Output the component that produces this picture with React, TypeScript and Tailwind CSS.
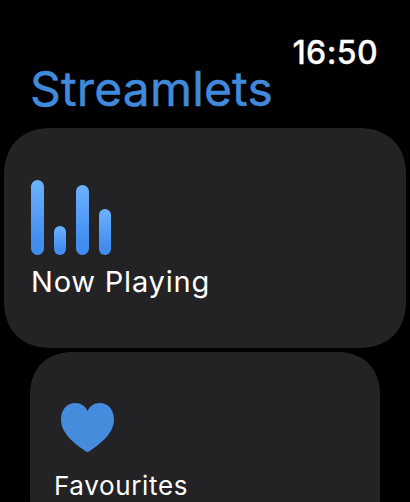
import type { ReactNode } from "react";

const BARS = [
  { id: "a", className: "w-[13px] h-[75.5px]" },
  { id: "b", className: "w-3 h-[29px]" },
  { id: "c", className: "w-[13px] h-[70px]" },
  { id: "d", className: "w-3 h-[46.5px]" },
];

function EqualizerIcon() {
  return (
    <div className="flex h-[76px] items-end gap-[10px]">
      {BARS.map((bar) => (
        <span
          key={bar.id}
          className={`rounded-full bg-linear-to-b from-[#6db2ff] to-[#428df0] to-80% ${bar.className}`}
        />
      ))}
    </div>
  );
}

function HeartIcon() {
  return (
    <svg width="53" height="49" viewBox="0 0 53 49" fill="#468cdd">
      <path d="M26.5 49Q25.500 49 22.500 46.800C8.500 37 0 28 0 16.500C0 6.500 6 0 14.500 0C20 0 24.300 3 26.500 8C28.700 3 33 0 38.500 0C47 0 53 6.500 53 16.500C53 28 44.500 37 30.500 46.800Q27.500 49 26.500 49Z" />
    </svg>
  );
}

function Card({ className, children }: { className: string; children: ReactNode }) {
  return (
    <section className={`shrink-0 bg-[#232325] [corner-shape:superellipse(1.2)] ${className}`}>
      {children}
    </section>
  );
}

export default function App() {
  return (
    <main className="flex h-[502px] w-[410px] flex-col overflow-hidden bg-black font-['Inter',sans-serif] text-white">
      <header className="flex h-32 shrink-0 justify-between pl-[30px] pr-8">
        <h1 className="pt-[59px] text-[48px] leading-[60px] font-normal tracking-[0.15px] whitespace-nowrap text-[#4189db] [-webkit-text-stroke:0.5px_#4189db]">
          Streamlets
        </h1>
        <time className="pt-[33px] text-[32px] leading-10 font-medium tracking-[0.4px] [-webkit-text-stroke:0.3px_white]">
          16:50
        </time>
      </header>

      <Card className="mx-1 h-[220px] rounded-[48px] pt-[51px] pl-[27px]">
        <EqualizerIcon />
        <h2 className="mt-[9px] text-[29px] leading-9 font-normal tracking-[0.8px]">Now Playing</h2>
      </Card>

      <Card className="mx-[30px] mt-1 h-[190px] rounded-[44px] pt-[51px] pl-[31px]">
        <HeartIcon />
        <h2 className="mt-[18px] -ml-[7px] text-[26px] leading-8 font-normal tracking-[0.65px]">
          Favourites
        </h2>
      </Card>
    </main>
  );
}
